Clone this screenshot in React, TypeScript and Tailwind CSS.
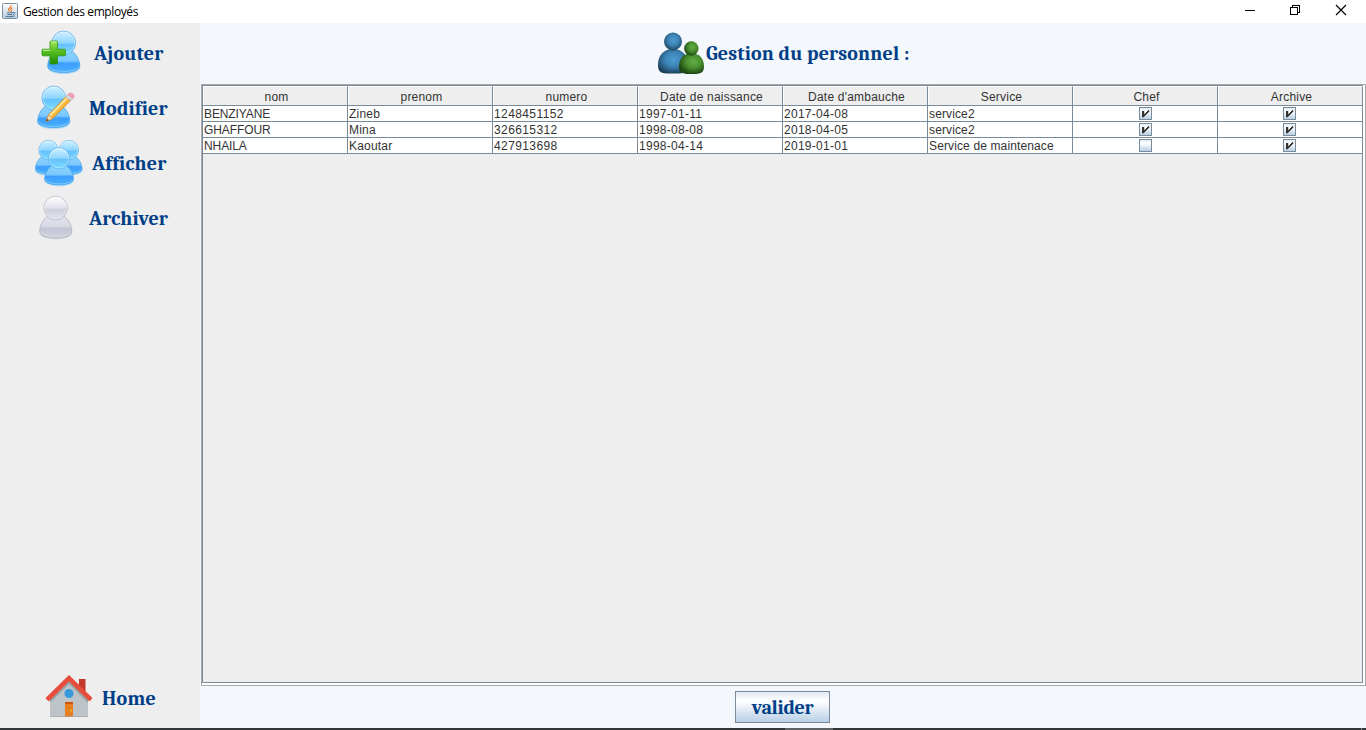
import React from "react";

const HEADING = "font-['Cambria','Caladea','DejaVu_Serif_Condensed','DejaVu_Serif',serif] font-bold text-[#003f87] whitespace-nowrap";

function Defs() {
  return (
    <svg width="0" height="0" className="absolute" aria-hidden="true">
      <defs>
        <linearGradient id="blueHead" x1="0" y1="0" x2="0" y2="1">
          <stop offset="0" stopColor="#d3f1ff" />
          <stop offset=".5" stopColor="#8fd6fe" />
          <stop offset=".56" stopColor="#66c1fd" />
          <stop offset="1" stopColor="#7fdcff" />
        </linearGradient>
        <linearGradient id="blueBody" x1="0" y1="0" x2="0" y2="1">
          <stop offset="0" stopColor="#8fd6fe" />
          <stop offset=".5" stopColor="#7cc8fe" />
          <stop offset=".6" stopColor="#3d9dfc" />
          <stop offset="1" stopColor="#48b2ff" />
        </linearGradient>
        <linearGradient id="greyHead" x1="0" y1="0" x2="0" y2="1">
          <stop offset="0" stopColor="#ffffff" />
          <stop offset=".5" stopColor="#e0e1ea" />
          <stop offset=".56" stopColor="#cdcfdc" />
          <stop offset="1" stopColor="#e2e3ec" />
        </linearGradient>
        <linearGradient id="greyBody" x1="0" y1="0" x2="0" y2="1">
          <stop offset="0" stopColor="#e2e3eb" />
          <stop offset=".5" stopColor="#d9dae4" />
          <stop offset=".6" stopColor="#c3c6d4" />
          <stop offset="1" stopColor="#cfd1dd" />
        </linearGradient>
        <linearGradient id="plus" x1="0" y1="0" x2="0" y2="1">
          <stop offset="0" stopColor="#a6e85c" />
          <stop offset=".45" stopColor="#56bd22" />
          <stop offset="1" stopColor="#218c05" />
        </linearGradient>
        <radialGradient id="teamBlue" cx=".52" cy=".42" r=".6">
          <stop offset="0" stopColor="#4b9bd0" />
          <stop offset=".5" stopColor="#3c83b4" />
          <stop offset="1" stopColor="#1c3f59" />
        </radialGradient>
        <radialGradient id="teamGreen" cx=".58" cy=".4" r=".6">
          <stop offset="0" stopColor="#62ad45" />
          <stop offset=".5" stopColor="#4a902f" />
          <stop offset="1" stopColor="#1f4812" />
        </radialGradient>
        <linearGradient id="javaBg" x1="0" y1="0" x2="0" y2="1">
          <stop offset="0" stopColor="#ffffff" />
          <stop offset="1" stopColor="#b9cadb" />
        </linearGradient>
      </defs>
    </svg>
  );
}

function Person({ grey = false }: { grey?: boolean }) {
  const edge = grey ? "#aeb2c3" : "#4aa6e8";
  const body = "M8.500 20.500C4 23.500 .7 30 .7 35.500C.7 44 32.800 44 32.800 35.500C32.800 30 29.500 23.500 25 20.500C22 18 11.500 18 8.500 20.500Z";
  return (
    <g>
      <path d={body} transform="translate(0 1.600)" fill={grey ? "#a9abb5" : "#6cc5f5"} opacity=".4" />
      <path d={body} fill={grey ? "url(#greyBody)" : "url(#blueBody)"} stroke={edge} strokeWidth=".8" />
      <path d="M1.900 35.500C2.500 42.400 31 42.400 31.600 35.500" fill="none" stroke="#fff" strokeOpacity=".4" strokeWidth=".8" />
      <circle cx="16.700" cy="12.200" r="11.800" fill={grey ? "url(#greyHead)" : "url(#blueHead)"} stroke={edge} strokeWidth=".7" />
      <circle cx="16.700" cy="12.200" r="10.900" fill="none" stroke="#fff" strokeOpacity=".5" strokeWidth=".8" />
    </g>
  );
}

function AddIcon() {
  return (
    <svg width="48" height="48" viewBox="0 0 48 48">
      <g transform="translate(9 .700)"><Person /></g>
      <path d="M13 11h5.500q1 0 1 1v7.200h7q1 0 1 1v4.600q0 1-1 1h-7v7.200q0 1-1 1H13q-1 0-1-1v-7.200H5q-1 0-1-1v-4.600q0-1 1-1h7V12q0-1 1-1Z" fill="url(#plus)" stroke="#2c960e" strokeWidth=".8" />
      <path d="M13 12h5.500M5 20.300h7.500" stroke="#cbf59c" strokeWidth="1" />
    </svg>
  );
}

function EditIcon() {
  return (
    <svg width="48" height="48" viewBox="0 0 48 48">
      <g transform="translate(5 .700)"><Person /></g>
      <path d="M14 36.500L16.500 30L35 10.500L39.500 14.500L20.500 33.700Z" fill="#f8b63d" stroke="#cf8021" strokeWidth=".8" />
      <path d="M18 30.500L35.500 12.500" stroke="#ffe79a" strokeWidth="1.800" />
      <path d="M14 36.500L16.500 30Q18.500 31 20.500 33.700Z" fill="#f5d9a8" stroke="#b98237" strokeWidth=".5" />
      <path d="M14 36.500L15 33.700L17 35.300Z" fill="#664218" />
      <path d="M33.700 11.700L36 9.400L41 13.500L38.700 15.800Z" fill="#d8d9e2" stroke="#a0a0ad" strokeWidth=".5" />
      <path d="M36 9.400Q38.500 7 41 9Q43 11 41 13.500Z" fill="#f6a1b4" stroke="#dc8298" strokeWidth=".6" />
    </svg>
  );
}

function GroupIcon() {
  return (
    <svg width="48" height="48" viewBox="0 0 48 48">
      <g transform="translate(-.200 0) scale(.82)"><Person /></g>
      <g transform="translate(20.200 0) scale(.82)"><Person /></g>
      <g transform="translate(9 7.200) scale(.9)"><Person /></g>
    </svg>
  );
}

function ArchiveIcon() {
  return (
    <svg width="48" height="48" viewBox="0 0 48 48">
      <g transform="translate(7 .800)"><Person grey /></g>
    </svg>
  );
}

function HomeIcon() {
  return (
    <svg width="48" height="48" viewBox="0 0 48 48">
      <path d="M34 4h6.500v17L34 15Z" fill="#c0392b" />
      <path d="M24 5L43 23V42H5V23Z" fill="#bdc3c7" />
      <path d="M24 6L43 24V28L24 9L5 28V24Z" fill="#95a5a6" />
      <path d="M24 0L47.500 23L44.500 26.500L24 6.500L3.500 26.500L.5 23Z" fill="#e74c3c" />
      <circle cx="24" cy="18.500" r="4.500" fill="#3498db" />
      <path d="M20 27h8v15h-8Z" fill="#e67e22" />
      <path d="M20 27h8v2h-8Z" fill="#d35400" />
      <circle cx="26" cy="35.500" r="1" fill="#f1c40f" />
      <path d="M5 41.500H43" stroke="#95a5a6" strokeWidth=".6" />
    </svg>
  );
}

function TeamIcon() {
  return (
    <svg width="48" height="44" viewBox="0 0 48 44">
      <path d="M1 33C1 23 7 17 16 17C25 17 31 23 31 33C31 42 26 41.500 16 41.500C6 41.500 1 42 1 33Z" fill="url(#teamBlue)" />
      <circle cx="16" cy="9.500" r="9" fill="url(#teamBlue)" />
      <path d="M22 34.500C22 26 27 21.500 34.500 21.500C42 21.500 47 26 47 34.500C47 42 42 42 34.500 42C27 42 22 42 22 34.500Z" fill="url(#teamGreen)" />
      <circle cx="34.300" cy="16.500" r="7.200" fill="url(#teamGreen)" />
    </svg>
  );
}

function JavaIcon() {
  return (
    <svg width="16" height="16" viewBox="0 0 16 16" className="-mt-px">
      <rect x=".5" y=".5" width="15" height="15" rx="1" fill="url(#javaBg)" stroke="#7d8fa3" />
      <path d="M9 2Q9.500 3.700 7.500 5T7.500 8.500M10.500 4.800Q8 6 9 7T8.700 8.700" fill="none" stroke="#e8701b" strokeWidth="1.100" />
      <path d="M5 9.800H11M11 9.500Q13.500 9 12.700 10.500T10.800 11.500M5.500 11.600H10M3.500 13.300Q8 14.300 12.500 13" fill="none" stroke="#41698e" strokeWidth=".9" />
    </svg>
  );
}

const columns = ["nom", "prenom", "numero", "Date de naissance", "Date d'ambauche", "Service", "Chef", "Archive"];
const rows: (string | boolean)[][] = [
  ["BENZIYANE", "Zineb", "1248451152", "1997-01-11", "2017-04-08", "service2", true, true],
  ["GHAFFOUR", "Mina", "326615312", "1998-08-08", "2018-04-05", "service2", true, true],
  ["NHAILA", "Kaoutar", "427913698", "1998-04-14", "2019-01-01", "Service de maintenace", false, true],
];
const cellStyles = [
  "pl-px tracking-[-0.1px]",
  "pl-px tracking-[0.2px]",
  "pl-px tracking-[0.4px]",
  "pl-px tracking-[0.28px]",
  "pl-px tracking-[0.28px]",
  "pl-px tracking-[0.13px]",
  "justify-center",
  "justify-center pr-px",
];

function Check({ on }: { on: boolean }) {
  return (
    <span className="flex h-[13px] w-[13px] border border-[#7a8a99] bg-linear-to-b from-[#e3ecf5] via-white via-30% to-[#b8cfe5]">
      {on && (
        <svg width="11" height="11" viewBox="0 0 11 11" className="shrink-0" shapeRendering="crispEdges">
          <path d="M8 2h1v2h-1v1h-1v1h-1v1h-1v1h-1v1h-2v-6h2v3h1v-1h1v-1h1v-1h1Z" fill="#333" stroke="#333" strokeWidth=".2" />
        </svg>
      )}
    </span>
  );
}

function NavItem({ icon, label, pad, gap }: { icon: React.ReactNode; label: string; pad: string; gap: string }) {
  return (
    <div className={`flex h-[55px] items-center ${pad} ${gap}`}>
      {icon}
      <span className={`${HEADING} text-[20px] leading-6 tracking-[0.2px]`}>{label}</span>
    </div>
  );
}

export default function App() {
  return (
    <div className="flex h-[730px] w-[1366px] flex-col overflow-hidden bg-[#f4f7fc]">
      <Defs />
      <header className="flex h-[23px] shrink-0 items-center bg-white pl-[2px]">
        <JavaIcon />
        <span className="ml-[5px] font-['Segoe_UI','Open_Sans',sans-serif] text-[12px] leading-4 tracking-[-0.4px] text-black">Gestion des employés</span>
        <svg className="ml-auto" width="122" height="23" viewBox="0 0 122 23" fill="none" stroke="#000" shapeRendering="crispEdges">
          <path d="M1 10.500H11M46.500 7.500H53.500V14.500H46.500ZM48.500 7V5.500H55.500V12.500H54" />
          <path d="M92 5L102 15M102 5L92 15" shapeRendering="auto" strokeWidth="1.200" />
        </svg>
      </header>
      <main className="flex min-h-0 flex-1">
        <nav className="flex w-[200px] shrink-0 flex-col bg-[#eeeeee] pt-[3px] pb-[2px]">
          <NavItem icon={<AddIcon />} label="Ajouter" pad="pl-[38px]" gap="gap-[8px]" />
          <NavItem icon={<EditIcon />} label="Modifier" pad="pl-[32px]" gap="gap-[9px]" />
          <NavItem icon={<GroupIcon />} label="Afficher" pad="pl-[35px]" gap="gap-[9px]" />
          <NavItem icon={<ArchiveIcon />} label="Archiver" pad="pl-[32px]" gap="gap-[9px]" />
          <div className="mt-auto">
            <NavItem icon={<HomeIcon />} label="Home" pad="pl-[45px]" gap="gap-[9px]" />
          </div>
        </nav>
        <section className="flex min-w-0 flex-1 flex-col">
          <div className="flex h-[61px] shrink-0 items-center pl-[457px]">
            <TeamIcon />
            <h1 className={`${HEADING} ml-[1px] text-[20px] leading-6 tracking-[0.15px]`}>Gestion du personnel :</h1>
          </div>
          <div className="ml-px h-[602px] w-[1165px] shrink-0 border border-[#a9a9a9] bg-white pr-[2px] pb-[2px]">
            <div className="h-full w-[1161px] border border-[#7a8a99] bg-[#eeeeee] font-['Arial','Liberation_Sans',sans-serif] text-[12px] text-[#333]">
              <div className="grid w-[1160px] grid-cols-[repeat(8,145px)]">
                {columns.map((name) => (
                  <div key={name} className="flex h-5 items-center justify-center border-t border-r border-b border-t-white border-r-[#7a8a99] border-b-[#7a8a99] pt-px pl-[3px] leading-4 tracking-[0.21px] shadow-[inset_1px_0_#fff]">{name}</div>
                ))}
              </div>
              {rows.map((row) => (
                <div key={String(row[0])} className="grid w-[1160px] grid-cols-[repeat(8,145px)]">
                  {row.map((cell, i) => (
                    <div key={i} className={`flex h-4 items-center border-r border-b border-[#7a8a99] bg-white leading-4 whitespace-nowrap ${cellStyles[i]}`}>
                      {typeof cell === "boolean" ? <Check on={cell} /> : cell}
                    </div>
                  ))}
                </div>
              ))}
            </div>
          </div>
          <div className="flex flex-1 justify-center pt-[5px] pr-[2px]">
            <button className={`${HEADING} h-8 w-[95px] border border-[#7a8a99] bg-linear-to-b from-[#e0eaf4] via-white via-30% to-[#b8cfe5] pt-[2px] pl-px text-[20px] leading-6 tracking-[-0.3px]`}>valider</button>
          </div>
        </section>
      </main>
      <footer className="flex h-[2px] shrink-0 bg-[#333438]">
        <span className="ml-[785px] w-12 bg-[#606164]" />
        <span className="ml-[528px] w-px bg-[#88898b]" />
      </footer>
    </div>
  );
}
